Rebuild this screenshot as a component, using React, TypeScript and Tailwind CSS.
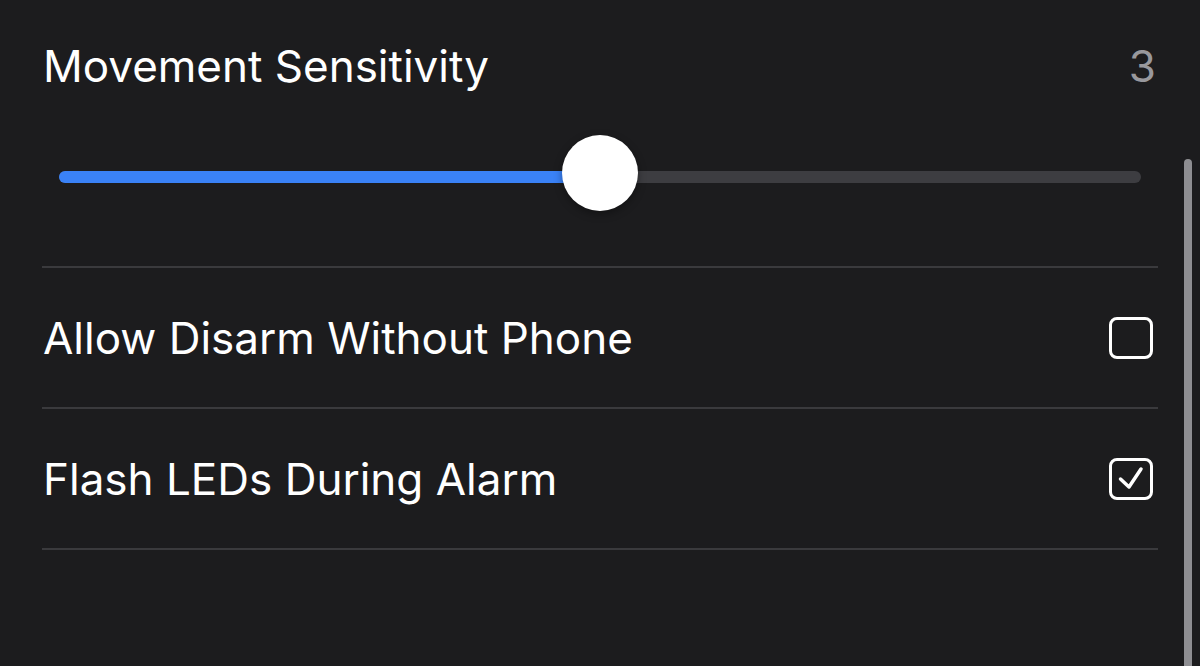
import { useState } from 'react';

function Checkbox({ checked, onToggle }: { checked: boolean; onToggle: () => void }) {
  return (
    <button
      onClick={onToggle}
      className="relative mr-[5px] w-[44px] h-[42px] rounded-[8px] border-[3.5px] border-white"
    >
      {checked && (
        <svg
          className="absolute -left-[3.5px] -top-[3.5px]"
          width="44"
          height="42"
          viewBox="0 0 44 42"
          fill="none"
        >
          <polyline
            points="11.5,22 20,30 32,12"
            stroke="white"
            strokeWidth="3.5"
            strokeLinecap="round"
            strokeLinejoin="round"
          />
        </svg>
      )}
    </button>
  );
}

export default function App() {
  const [sensitivity] = useState(3);
  const [allowDisarm, setAllowDisarm] = useState(false);
  const [flashLeds, setFlashLeds] = useState(true);

  const pct = ((sensitivity - 1) / 4) * 100;

  return (
    <div className="relative w-[1200px] h-[666px] overflow-hidden bg-[#1c1c1e] font-['Inter',sans-serif] text-white">
      <div className="px-[42px]">
        {/* Sensitivity */}
        <div className="border-b-2 border-[#3a3a3d]">
          <div className="pt-[40px] flex items-center justify-between pl-[1px] pr-[2px]">
            <span className="text-[44px] leading-[52px]">Movement Sensitivity</span>
            <span className="text-[44px] leading-[52px] text-[#98989d]">{sensitivity}</span>
          </div>
          <div className="mt-[43px] mb-[55px] mx-[17px] h-[76px] relative flex items-center">
            <div className="mt-[7px] w-full h-[12px] rounded-full bg-[#3d3d41] overflow-hidden">
              <div className="h-full bg-[#3a82f7]" style={{ width: `${pct}%` }} />
            </div>
            <div
              className="absolute top-0 w-[76px] h-[76px] -ml-[38px] rounded-full bg-white shadow-[0_3px_8px_rgba(0,0,0,0.35)]"
              style={{ left: `${pct}%` }}
            />
          </div>
        </div>

        {/* Toggles */}
        <div className="h-[141px] flex items-center justify-between border-b-2 border-[#3a3a3d] pl-[1px]">
          <span className="text-[44px] leading-[52px]">Allow Disarm Without Phone</span>
          <Checkbox checked={allowDisarm} onToggle={() => setAllowDisarm(!allowDisarm)} />
        </div>
        <div className="h-[141px] flex items-center justify-between border-b-2 border-[#3a3a3d] pl-[1px]">
          <span className="text-[44px] leading-[52px]">Flash LEDs During Alarm</span>
          <Checkbox checked={flashLeds} onToggle={() => setFlashLeds(!flashLeds)} />
        </div>
      </div>

      {/* scroll indicator */}
      <div className="absolute left-[1184px] top-[159px] w-[8px] h-[560px] rounded-full bg-[#8e8e92]" />
    </div>
  );
}
